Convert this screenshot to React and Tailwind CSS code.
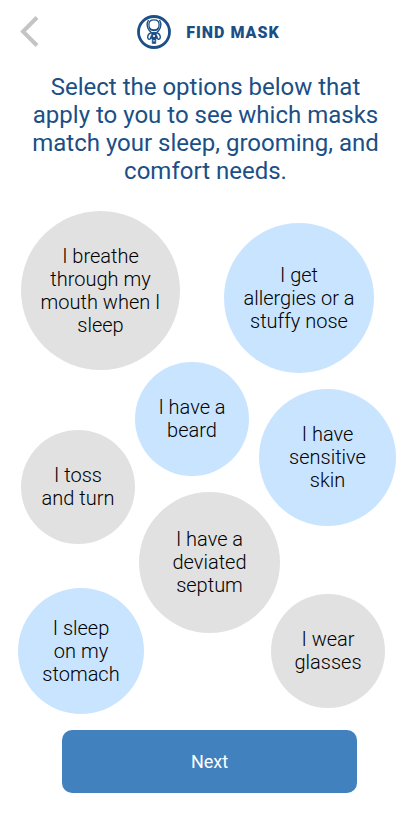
import { useState } from "react";

const columns = [
  {
    className: "w-[162px] items-start",
    bubbles: [
      { id: "mouth", lines: ["I breathe", "through my", "mouth when I", "sleep"], place: "ml-[3px] size-[159px]" },
      { id: "toss", lines: ["I toss", "and turn"], place: "mt-[60px] ml-[3px] size-[114px]" },
      { id: "stomach", lines: ["I sleep", "on my", "stomach"], place: "mt-11 size-[126px]" },
    ],
  },
  {
    className: "-ml-[45px] w-[145px] items-start pt-[151px]",
    bubbles: [
      { id: "beard", lines: ["I have a", "beard"], place: "size-[114px]" },
      { id: "septum", lines: ["I have a", "deviated", "septum"], place: "mt-4 ml-1 size-[141px]" },
    ],
  },
  {
    className: "-ml-14 w-[172px] items-end pt-3",
    bubbles: [
      { id: "allergies", lines: ["I get", "allergies or a", "stuffy nose"], place: "mr-[22px] size-[150px]" },
      { id: "skin", lines: ["I have", "sensitive", "skin"], place: "mt-4 size-[137px]" },
      { id: "glasses", lines: ["I wear", "glasses"], place: "mt-[68px] mr-[11px] size-[114px]" },
    ],
  },
];

function MaskLogo() {
  return (
    <svg viewBox="0 0 34 34" className="size-[34px]" fill="none" stroke="#1b4f86" aria-hidden="true">
      <circle cx="17" cy="17" r="15.5" strokeWidth="2.8" />
      <path d="M11.500 5C9.500 8.500 10 12.500 12.300 15.500l2.400 2.500h4.600l2.400-2.500C24 12.500 24.500 8.500 22.500 5" strokeWidth="1.400" />
      <path d="M11.900 9.500C11.900 13.200 14 15.600 17 15.600S22.100 13.200 22.100 9.500C22.100 6 20 4.800 17 4.800S11.900 6 11.900 9.500Z" strokeWidth="1.300" />
      <path d="M12.800 13c1.400 2.600 7 2.600 8.400 0" strokeWidth="1.200" />
      <path d="M13.800 18c-2 .7-3.200 2.300-3.100 4.500.2 2.200 2.500 2.500 3.100.4l.8-2.400M20.200 18c2 .7 3.200 2.300 3.100 4.500-.2 2.200-2.500 2.500-3.100.4l-.8-2.400" strokeWidth="1.400" />
      <path d="M15 17.500h4l1 5.500-1.200 1.500v4h-3.600v-4L14 23Z" fill="#1b4f86" strokeWidth=".6" />
      <circle cx="17" cy="21" r="1.100" fill="#fff" stroke="none" />
      <path d="M16 25.800h2" stroke="#fff" strokeWidth=".8" />
    </svg>
  );
}

function Bubble({ lines, place, selected, onToggle }) {
  return (
    <button
      type="button"
      aria-pressed={selected}
      onClick={onToggle}
      className={`flex shrink-0 flex-col items-center justify-center rounded-full text-xl leading-[23px] font-light text-black ${
        selected ? "bg-[#c9e4ff]" : "bg-[#e1e1e1]"
      } ${place}`}
    >
      {lines.map((line) => (
        <span key={line} className="whitespace-nowrap">{line} </span>
      ))}
    </button>
  );
}

export default function App() {
  const [selected, setSelected] = useState(["allergies", "beard", "skin", "stomach"]);
  const toggle = (id) =>
    setSelected((now) => (now.includes(id) ? now.filter((x) => x !== id) : [...now, id]));

  return (
    <main className="flex min-h-screen flex-col bg-white font-['Roboto',sans-serif]">
      <header className="grid h-16 grid-cols-[1fr_auto_1fr] items-center px-5">
        <button type="button" aria-label="Back" className="w-5">
          <svg viewBox="0 0 20 32" className="h-8 w-5" fill="none" stroke="#c4c4c4" strokeWidth="4" aria-hidden="true">
            <path d="M17 1.500 3 15.500l14 14" />
          </svg>
        </button>
        <div className="flex items-center gap-[15px] pl-[6px]">
          <MaskLogo />
          <span className="pt-px text-base font-black tracking-[1px] text-[#1b4f86]">FIND MASK</span>
        </div>
      </header>

      <h1 className="mx-auto mt-[9px] max-w-[360px] text-center text-2xl leading-7 text-[#1b4f86]">
        Select the options below that apply to you to see which masks match your sleep, grooming, and comfort needs.
      </h1>

      <section aria-label="Options" className="mt-[26px] flex justify-center pl-[3px]">
        {columns.map((column) => (
          <div key={column.className} className={`pointer-events-none flex shrink-0 flex-col *:pointer-events-auto ${column.className}`}>
            {column.bubbles.map(({ id, lines, place }) => (
              <Bubble key={id} lines={lines} place={place} selected={selected.includes(id)} onToggle={() => toggle(id)} />
            ))}
          </div>
        ))}
      </section>

      <div className="mt-4 flex pr-[54px] pb-[30px] pl-[62px]">
        <button type="button" className="h-[63px] flex-1 rounded-[10px] bg-[#4181be] text-lg text-white">
          Next
        </button>
      </div>
    </main>
  );
}
